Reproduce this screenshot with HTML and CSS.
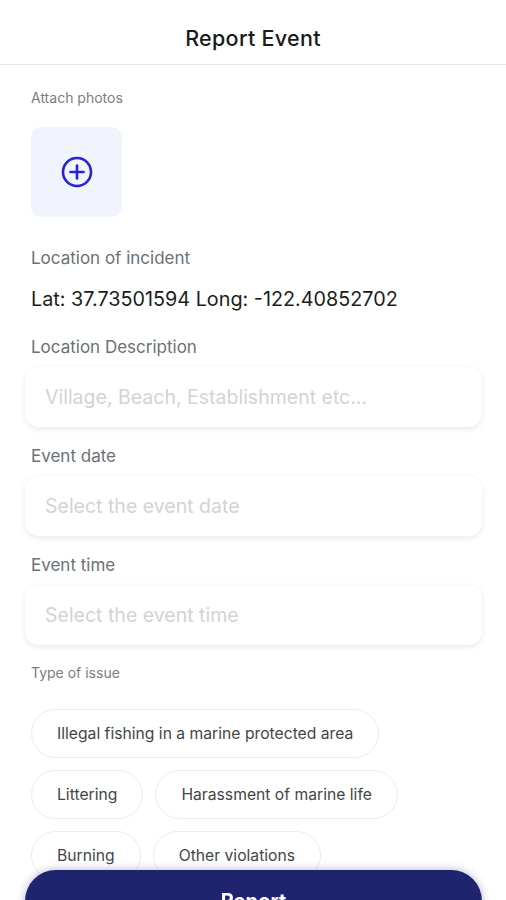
FILE: index.html
```html
<!DOCTYPE html>
<html lang="en">
<head>
  <meta charset="UTF-8" />
  <meta name="viewport" content="width=device-width, initial-scale=1.0"/>
  <title>Report Event</title>
  <link rel="stylesheet" href="styles.css">
</head>
<body>
  <header class="topbar">
    <h1>Report Event</h1>
  </header>

  <main class="content">
    <p class="small-label attach-label">Attach photos</p>
    <button class="photo-add" type="button" aria-label="Add photo">
      <svg width="34" height="34" viewBox="0 0 34 34" fill="none" stroke="#2424d4" stroke-width="2.6" stroke-linecap="round">
        <circle cx="17" cy="17" r="14"/>
        <line x1="17" y1="10.5" x2="17" y2="23.5"/>
        <line x1="10.5" y1="17" x2="23.5" y2="17"/>
      </svg>
    </button>

    <p class="field-label incident-label">Location of incident</p>
    <p class="coords">Lat: 37.73501594 Long: -122.40852702</p>

    <p class="field-label">Location Description</p>
    <div class="field">Village, Beach, Establishment etc...</div>

    <p class="field-label">Event date</p>
    <div class="field">Select the event date</div>

    <p class="field-label">Event time</p>
    <div class="field">Select the event time</div>

    <p class="small-label issue-label">Type of issue</p>
    <div class="chips">
      <span class="chip">Illegal fishing in a marine protected area</span>
      <span class="chip">Littering</span>
      <span class="chip">Harassment of marine life</span>
      <span class="chip">Burning</span>
      <span class="chip">Other violations</span>
    </div>
  </main>

  <button class="report-btn" type="button">Report</button>
</body>
</html>
```

FILE: styles.css
```css
body {
  margin: 0;
  font-family: Inter, "Noto Sans", sans-serif;
  background-color: #fff;
  color: #1a1a1a;
}
.topbar {
  height: 64px;
  border-bottom: 1px solid #e6e6e6;
  display: flex;
  align-items: center;
  justify-content: center;
}
.topbar h1 {
  margin: 12px 0 0;
  font-size: 21.5px;
  font-weight: 500;
  color: #1a1a1a;
  letter-spacing: 0.3px;
}
.content {
  padding: 0 24px 120px 25px;
}
.small-label {
  margin: 0 0 0 6px;
  font-size: 14px;
  line-height: 16px;
  color: #7a7d83;
}
.attach-label {
  margin-top: 25px;
}
.photo-add {
  display: flex;
  align-items: center;
  justify-content: center;
  width: 91px;
  height: 90px;
  margin: 21px 0 0 6px;
  padding: 0;
  border: none;
  border-radius: 10px;
  background-color: #f1f4fd;
}
.field-label {
  margin: 19px 0 10px 6px;
  font-size: 17px;
  line-height: 20px;
  color: #6c7077;
}
.incident-label {
  margin-top: 31px;
  margin-bottom: 0;
}
.coords {
  margin: 20px 0 27px 6px;
  font-size: 19.8px;
  line-height: 22px;
  color: #1c1c1c;
}
.field {
  height: 60px;
  box-sizing: border-box;
  padding: 0 20px;
  display: flex;
  align-items: center;
  border-radius: 14px;
  background-color: #fff;
  box-shadow: 0 2px 6px rgba(0, 0, 0, 0.09);
  font-size: 19.5px;
  color: #d3d3d3;
}
.issue-label {
  margin-top: 20px;
}
.chips {
  display: flex;
  flex-wrap: wrap;
  gap: 12px;
  margin: 28px 0 0 6px;
}
.chip {
  height: 49px;
  box-sizing: border-box;
  display: inline-flex;
  align-items: center;
  padding: 0 25px;
  border: 1px solid #ececec;
  border-radius: 25px;
  font-size: 15.7px;
  color: #454545;
}
.report-btn {
  position: fixed;
  left: 25px;
  right: 24px;
  bottom: -32px;
  height: 62px;
  border: none;
  border-radius: 31px;
  background-color: #1f246e;
  box-shadow: 0 0 8px rgba(31, 36, 110, 0.35);
  color: #fff;
  font-family: Inter, "Noto Sans", sans-serif;
  font-size: 20px;
  font-weight: 700;
}
```
